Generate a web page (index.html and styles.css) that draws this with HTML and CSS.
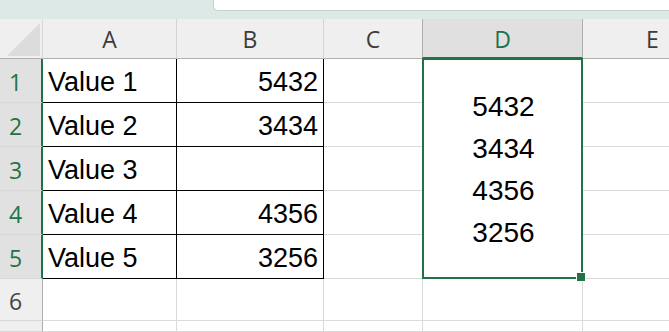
FILE: index.html
```html
<!DOCTYPE html>
<html>
<head>
<meta charset="utf-8">
<link rel="stylesheet" href="styles.css">
</head>
<body>
<div class="topbar"><div class="formula-box"></div></div>
<div class="sheet">
  <div class="corner"><div class="tri"></div></div>
  <div class="colhdr">A</div>
  <div class="colhdr">B</div>
  <div class="colhdr">C</div>
  <div class="colhdr sel">D</div>
  <div class="colhdr last">E</div>

  <div class="rowhdr sel">1</div>
  <div class="cell bk">Value 1</div>
  <div class="cell bk num">5432</div>
  <div class="cell"></div>
  <div class="merged"><span>5432</span><span>3434</span><span>4356</span><span>3256</span></div>
  <div class="cell last"></div>

  <div class="rowhdr sel">2</div>
  <div class="cell bk">Value 2</div>
  <div class="cell bk num">3434</div>
  <div class="cell"></div>
  <div class="cell last"></div>

  <div class="rowhdr sel">3</div>
  <div class="cell bk">Value 3</div>
  <div class="cell bk num"></div>
  <div class="cell"></div>
  <div class="cell last"></div>

  <div class="rowhdr sel">4</div>
  <div class="cell bk">Value 4</div>
  <div class="cell bk num">4356</div>
  <div class="cell"></div>
  <div class="cell last"></div>

  <div class="rowhdr sel">5</div>
  <div class="cell bk">Value 5</div>
  <div class="cell bk num">3256</div>
  <div class="cell"></div>
  <div class="cell last"></div>

  <div class="rowhdr">6</div>
  <div class="cell"></div>
  <div class="cell"></div>
  <div class="cell"></div>
  <div class="cell"></div>
  <div class="cell last"></div>

  <div class="rowhdr"></div>
  <div class="cell"></div>
  <div class="cell"></div>
  <div class="cell"></div>
  <div class="cell"></div>
  <div class="cell last"></div>
</div>
</body>
</html>
```
FILE: styles.css
```css
* { box-sizing: border-box; }
html, body {
  margin: 0;
  padding: 0;
  background: #ffffff;
  overflow: hidden;
  width: 669px;
  height: 332px;
}
.topbar {
  height: 19px;
  background: #dce9e6;
}
.formula-box {
  margin-left: 213px;
  height: 11px;
  background: #ffffff;
  border-left: 1px solid #c8cecc;
  border-bottom: 1px solid #c8cecc;
  border-bottom-left-radius: 5px;
}
.sheet {
  display: grid;
  width: 722px;
  grid-template-columns: 43px 134px 147px 99px 160px 139px;
  grid-template-rows: 40px 44px 44px 44px 44px 44px 42px 11px;
  font-family: "Liberation Sans", Arial, sans-serif;
}
.corner {
  background: #efefef;
  border-right: 1px solid #d8d8d8;
  border-bottom: 1px solid #b0b0b0;
  position: relative;
}
.tri {
  position: absolute;
  left: 7px;
  top: 4px;
  width: 33px;
  height: 33px;
  background: #dcdcdc;
  clip-path: polygon(100% 0, 100% 100%, 0 100%);
}
.colhdr {
  background: #efefef;
  border-right: 1px solid #d4d4d4;
  border-bottom: 1px solid #b0b0b0;
  display: flex;
  align-items: center;
  justify-content: center;
  font-family: "Open Sans", "Liberation Sans", sans-serif;
  font-size: 23px;
  color: #3c3c3c;
  padding-top: 1px;
}
.colhdr.sel {
  background: #e0e0e0;
  color: #217346;
  border-bottom: 2px solid #217346;
  border-left: 1px solid #aeaeae;
  margin-left: -1px;
  border-right: 1px solid #aeaeae;
}
.colhdr.last { border-right: none; }
.rowhdr {
  background: #efefef;
  border-right: 1px solid #aeaeae;
  border-bottom: 1px solid #d8d8d8;
  display: flex;
  align-items: center;
  padding-left: 9px;
  padding-top: 2px;
  font-family: "Open Sans", "Liberation Sans", sans-serif;
  font-size: 23px;
  color: #444444;
}
.rowhdr.sel {
  background: #e1e1e1;
  color: #217346;
  border-right: 2px solid #217346;
}
.cell {
  border-right: 1px solid #dadada;
  border-bottom: 1px solid #dadada;
  display: flex;
  align-items: center;
  padding: 4px 5px 0 5px;
  font-size: 27px;
  color: #000000;
}
.cell.last { border-right: none; }
.cell.bk {
  border-right: 1px solid #000000;
  border-bottom: 1px solid #000000;
}
.cell.num { justify-content: flex-end; }
.merged {
  grid-column: 5;
  grid-row: 2 / span 5;
  margin: -1px 0 0 -1px;
  border: 2px solid #217346;
  position: relative;
  display: flex;
  flex-direction: column;
  align-items: center;
  justify-content: center;
  font-size: 28px;
  line-height: 42px;
  color: #000000;
  padding-left: 2px;
  padding-top: 2px;
}
.merged::after {
  content: "";
  position: absolute;
  right: -5px;
  bottom: -5px;
  width: 8px;
  height: 8px;
  background: #217346;
  border: 1px solid #ffffff;
}
```
